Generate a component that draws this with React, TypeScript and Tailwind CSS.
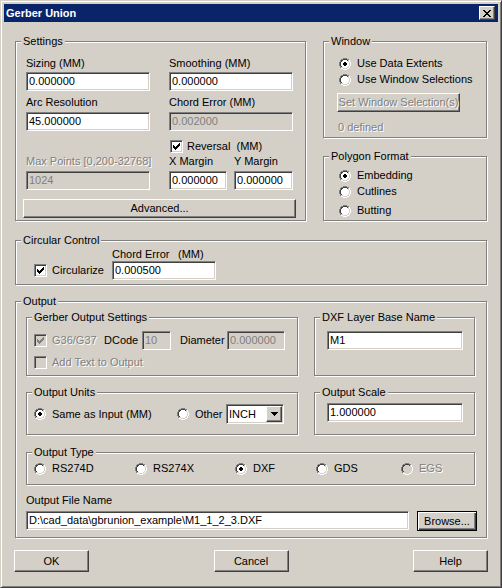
import React from "react";

const RADIO_ROWS = [
  "....GGGG....",
  "..GGKKKKGG..",
  ".GKKFFFFKLW.",
  ".GKFFFFFFLW.",
  "GKFFFFFFFFLW",
  "GKFFFFFFFFLW",
  "GKFFFFFFFFLW",
  "GKFFFFFFFFLW",
  ".GKFFFFFFLW.",
  ".GLLFFFFLLW.",
  "..WWLLLLWW..",
  "....WWWW....",
];
const DOT = [
  [5, 4, 2],
  [4, 5, 4],
  [4, 6, 4],
  [5, 7, 2],
];
const COLORS: Record<string, string> = {
  G: "#808080",
  K: "#404040",
  W: "#ffffff",
  L: "#d4d0c8",
  F: "#ffffff",
};

function Radio({ checked = false, disabled = false }: { checked?: boolean; disabled?: boolean }) {
  const rects: React.ReactNode[] = [];
  RADIO_ROWS.forEach((row, y) =>
    row.split("").forEach((c, x) => {
      if (c === ".") return;
      let fill = COLORS[c];
      if (c === "F" && disabled) fill = "#d4d0c8";
      rects.push(<rect key={`${x}-${y}`} x={x} y={y} width={1} height={1} fill={fill} />);
    })
  );
  return (
    <svg width="12" height="12" viewBox="0 0 12 12" shapeRendering="crispEdges" className="block shrink-0">
      {rects}
      {checked &&
        DOT.map(([x, y, w]) => (
          <rect key={`d${y}`} x={x} y={y} width={w} height={1} fill={disabled ? "#808080" : "#000"} />
        ))}
    </svg>
  );
}

function Check({ checked = false, disabled = false }: { checked?: boolean; disabled?: boolean }) {
  return (
    <div
      className={`w-[13px] h-[13px] shrink-0 flex items-center justify-center border border-t-[#808080] border-l-[#808080] border-r-white border-b-white shadow-[inset_1px_1px_0_#404040,inset_-1px_-1px_0_#d4d0c8] ${
        disabled ? "bg-[#d4d0c8]" : "bg-white"
      }`}
    >
      {checked && (
        <svg width="7" height="7" viewBox="0 0 7 7" shapeRendering="crispEdges" className="block">
          <path
            d="M6 0h1v1h-1z M5 1h2v1h-2z M0 2h1v1h-1z M4 2h3v1h-3z M0 3h2v1h-2z M3 3h3v1h-3z M0 4h5v1h-5z M1 5h3v1h-3z M2 6h1v1h-1z"
            fill={disabled ? "#808080" : "#000"}
          />
        </svg>
      )}
    </div>
  );
}

function Edit({ value, disabled = false, className = "" }: { value: string; disabled?: boolean; className?: string }) {
  return (
    <div
      className={`h-[19px] shrink-0 flex items-center pl-[2px] overflow-hidden whitespace-nowrap border border-t-[#808080] border-l-[#808080] border-r-white border-b-white shadow-[inset_1px_1px_0_#404040,inset_-1px_-1px_0_#d4d0c8] ${
        disabled ? "bg-[#d4d0c8] text-[#808080]" : "bg-white text-black"
      } ${className}`}
    >
      {value}
    </div>
  );
}

function Btn({
  children,
  className = "",
  disabled = false,
  isDefault = false,
}: {
  children: React.ReactNode;
  className?: string;
  disabled?: boolean;
  isDefault?: boolean;
}) {
  const frame = isDefault
    ? "border border-black shadow-[inset_1px_1px_0_#fff,inset_-1px_-1px_0_#404040,inset_-2px_-2px_0_#808080]"
    : "border border-t-white border-l-white border-r-[#404040] border-b-[#404040] shadow-[inset_-1px_-1px_0_#808080]";
  return (
    <div
      className={`shrink-0 flex items-center justify-center whitespace-nowrap bg-[#d4d0c8] ${frame} ${
        disabled ? "text-[#808080] [text-shadow:1px_1px_0_#fff]" : "text-black"
      } ${className}`}
    >
      {children}
    </div>
  );
}

function Group({ label, className = "", children }: { label: string; className?: string; children?: React.ReactNode }) {
  return (
    <div className={`relative shrink-0 border border-[#808080] shadow-[inset_1px_1px_0_#fff,1px_1px_0_#fff] ${className}`}>
      <span className="absolute left-[5px] top-[-7px] px-[2px] bg-[#d4d0c8] leading-[13px] whitespace-nowrap">{label}</span>
      {children}
    </div>
  );
}

function Dis({ children, className = "" }: { children: React.ReactNode; className?: string }) {
  return <span className={`text-[#808080] [text-shadow:1px_1px_0_#fff] whitespace-nowrap ${className}`}>{children}</span>;
}

function RadioRow({
  label,
  checked = false,
  disabled = false,
  className = "",
}: {
  label: string;
  checked?: boolean;
  disabled?: boolean;
  className?: string;
}) {
  return (
    <div className={`flex items-center h-[13px] ${className}`}>
      <Radio checked={checked} disabled={disabled} />
      {disabled ? <Dis className="ml-[6px]">{label}</Dis> : <span className="ml-[6px] whitespace-nowrap">{label}</span>}
    </div>
  );
}

export default function App() {
  return (
    <div className="w-[502px] h-[588px] flex flex-col bg-[#d4d0c8] border border-t-[#d4d0c8] border-l-[#d4d0c8] border-r-[#404040] border-b-[#404040] shadow-[inset_1px_1px_0_#fff,inset_-1px_-1px_0_#808080] p-[3px] text-[11px] leading-[13px] text-black font-['Liberation_Sans',Arial,sans-serif] overflow-hidden">
      {/* Title bar */}
      <div className="h-[18px] shrink-0 bg-[#0a246a] flex items-center justify-between pl-[2px] pr-[3px]">
        <span className="text-white font-bold pt-[1px]">Gerber Union</span>
        <div className="w-[16px] h-[14px] flex items-center justify-center bg-[#d4d0c8] border border-t-white border-l-white border-r-[#404040] border-b-[#404040] shadow-[inset_-1px_-1px_0_#808080]">
          <svg width="8" height="7" viewBox="0 0 8 7" shapeRendering="crispEdges" className="block">
            <path
              d="M0 0h2v1h-2z M6 0h2v1h-2z M1 1h2v1h-2z M5 1h2v1h-2z M2 2h4v1h-4z M3 3h2v1h-2z M2 4h4v1h-4z M1 5h2v1h-2z M5 5h2v1h-2z M0 6h2v1h-2z M6 6h2v1h-2z"
              fill="#000"
            />
          </svg>
        </div>
      </div>

      {/* Client */}
      <div className="flex flex-col pl-[11px]">
        {/* Row 1 */}
        <div className="flex gap-[17px] mt-[19px]">
          <Group label="Settings" className="w-[291px] h-[180px]">
            <div className="flex flex-col pt-[15px]">
              <div className="flex gap-[19px] pl-[10px]">
                <div className="flex flex-col w-[124px]">
                  <span className="whitespace-nowrap">Sizing (MM)</span>
                  <Edit value="0.000000" className="mt-[2px] w-[124px]" />
                  <span className="mt-[5px] whitespace-nowrap">Arc Resolution</span>
                  <Edit value="45.000000" className="mt-[3px] w-[124px]" />
                  <Dis className="mt-[24px] block">Max Points [0,200-32768]</Dis>
                  <Edit value="1024" disabled className="mt-[3px] w-[124px]" />
                </div>
                <div className="flex flex-col w-[124px]">
                  <span className="whitespace-nowrap">Smoothing (MM)</span>
                  <Edit value="0.000000" className="mt-[2px] w-[124px]" />
                  <span className="mt-[5px] whitespace-nowrap">Chord Error (MM)</span>
                  <Edit value="0.002000" disabled className="mt-[3px] w-[124px]" />
                  <div className="mt-[9px] flex items-center h-[13px] pl-[1px]">
                    <Check checked />
                    <span className="ml-[4px] whitespace-pre">Reversal  (MM)</span>
                  </div>
                  <div className="mt-[2px] flex h-[13px]">
                    <span className="w-[65px] whitespace-nowrap">X Margin</span>
                    <span className="whitespace-nowrap">Y Margin</span>
                  </div>
                  <div className="mt-[3px] flex">
                    <Edit value="0.000000" className="w-[58px]" />
                    <Edit value="0.000000" className="w-[59px] ml-[7px]" />
                  </div>
                </div>
              </div>
              <Btn className="mt-[9px] ml-[7px] w-[273px] h-[19px]">Advanced...</Btn>
            </div>
          </Group>

          <div className="flex flex-col">
            <Group label="Window" className="w-[164px] h-[97px]">
              <div className="flex flex-col pt-[15px] pl-[15px]">
                <RadioRow label="Use Data Extents" checked />
                <RadioRow label="Use Window Selections" className="mt-[3px]" />
                <Btn disabled className="mt-[7px] ml-[-2px] w-[123px] h-[19px]">
                  Set Window Selection(s)
                </Btn>
                <Dis className="mt-[9px] ml-[-1px] block">0 defined</Dis>
              </div>
            </Group>
            <Group label="Polygon Format" className="w-[164px] h-[65px] mt-[18px]">
              <div className="flex flex-col pt-[12px] pl-[15px]">
                <RadioRow label="Embedding" checked />
                <RadioRow label="Cutlines" className="mt-[3px]" />
                <RadioRow label="Butting" className="mt-[6px]" />
              </div>
            </Group>
          </div>
        </div>

        {/* Circular Control */}
        <Group label="Circular Control" className="w-[472px] h-[45px] mt-[19px]">
          <div className="flex items-end pt-[7px] pl-[18px]">
            <div className="w-[78px] h-[19px] flex items-center">
              <Check checked />
              <span className="ml-[5px] whitespace-nowrap">Circularize</span>
            </div>
            <div className="flex flex-col">
              <div className="flex h-[13px]">
                <span className="w-[66px] whitespace-nowrap">Chord Error</span>
                <span>(MM)</span>
              </div>
              <Edit value="0.000500" className="w-[104px]" />
            </div>
          </div>
        </Group>

        {/* Output */}
        <Group label="Output" className="w-[472px] h-[237px] mt-[16px]">
          <div className="flex flex-col pl-[10px] pt-[15px]">
            <div className="flex gap-[16px]">
              <Group label="Gerber Output Settings" className="w-[272px] h-[59px]">
                <div className="flex flex-col pt-[13px] pl-[7px]">
                  <div className="flex items-center h-[19px]">
                    <div className="w-[70px] flex items-center">
                      <Check checked disabled />
                      <Dis className="ml-[5px]">G36/G37</Dis>
                    </div>
                    <span className="w-[38px] whitespace-nowrap">DCode</span>
                    <Edit value="10" disabled className="w-[29px]" />
                    <span className="ml-[9px] w-[47px] whitespace-nowrap">Diameter</span>
                    <Edit value="0.000000" disabled className="w-[58px]" />
                  </div>
                  <div className="mt-[6px] flex items-center h-[13px]">
                    <Check disabled />
                    <Dis className="ml-[5px]">Add Text to Output</Dis>
                  </div>
                </div>
              </Group>
              <Group label="DXF Layer Base Name" className="w-[161px] h-[59px]">
                <div className="pt-[13px] pl-[12px]">
                  <Edit value="M1" className="w-[136px]" />
                </div>
              </Group>
            </div>

            <div className="flex gap-[16px] mt-[16px]">
              <Group label="Output Units" className="w-[272px] h-[43px]">
                <div className="flex items-center h-[20px] mt-[11px] pl-[7px]">
                  <div className="w-[143px] flex items-center">
                    <Radio checked />
                    <span className="ml-[6px] whitespace-nowrap">Same as Input (MM)</span>
                  </div>
                  <Radio />
                  <span className="ml-[6px] w-[31px] whitespace-nowrap">Other</span>
                  <div className="w-[58px] h-[20px] flex p-[1px] bg-white border border-t-[#808080] border-l-[#808080] border-r-white border-b-white shadow-[inset_1px_1px_0_#404040,inset_-1px_-1px_0_#d4d0c8]">
                    <span className="flex-1 flex items-center pl-[1px]">INCH</span>
                    <div className="w-[16px] h-[16px] flex items-center justify-center bg-[#d4d0c8] border border-t-white border-l-white border-r-[#404040] border-b-[#404040] shadow-[inset_-1px_-1px_0_#808080]">
                      <svg width="7" height="4" viewBox="0 0 7 4" shapeRendering="crispEdges" className="block">
                        <path d="M0 0h7v1h-7z M1 1h5v1h-5z M2 2h3v1h-3z M3 3h1v1h-1z" fill="#000" />
                      </svg>
                    </div>
                  </div>
                </div>
              </Group>
              <Group label="Output Scale" className="w-[161px] h-[43px]">
                <div className="pt-[10px] pl-[12px]">
                  <Edit value="1.000000" className="w-[136px]" />
                </div>
              </Group>
            </div>

            <Group label="Output Type" className="w-[449px] h-[33px] mt-[17px]">
              <div className="flex items-center h-[13px] mt-[9px] pl-[7px]">
                <RadioRow label="RS274D" className="w-[101px]" />
                <RadioRow label="RS274X" className="w-[100px]" />
                <RadioRow label="DXF" checked className="w-[81px]" />
                <RadioRow label="GDS" className="w-[85px]" />
                <RadioRow label="EGS" disabled />
              </div>
            </Group>

            <span className="mt-[9px] h-[13px] whitespace-nowrap">Output File Name</span>
            <div className="flex gap-[8px] mt-[4px]">
              <Edit value="D:\cad_data\gbrunion_example\M1_1_2_3.DXF" className="w-[383px]" />
              <Btn isDefault className="w-[60px] h-[20px]">
                Browse...
              </Btn>
            </div>
          </div>
        </Group>

        {/* Buttons */}
        <div className="flex justify-between w-[474px] ml-[-1px] mt-[12px]">
          <Btn className="w-[75px] h-[22px]">OK</Btn>
          <Btn className="w-[75px] h-[22px]">Cancel</Btn>
          <Btn className="w-[75px] h-[22px]">Help</Btn>
        </div>
      </div>
    </div>
  );
}
